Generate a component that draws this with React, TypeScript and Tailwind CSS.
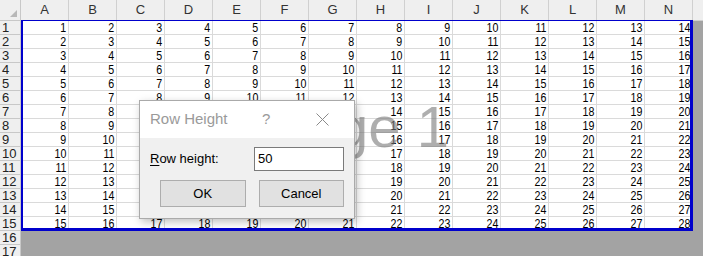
import React from 'react';

const COLS = ['A', 'B', 'C', 'D', 'E', 'F', 'G', 'H', 'I', 'J', 'K', 'L', 'M', 'N'];
const ROWS = Array.from({ length: 15 }, (_, i) => i + 1);

const font = { fontFamily: '"Liberation Sans", Arial, sans-serif' };

const RowHeightDialog: React.FC = () => {
  return (
    <div className="absolute left-[139px] top-[100px] z-20 w-[216px] h-[119px] border border-[#aaaaaa] bg-[#f0f0f0] shadow-[2px_3px_8px_rgba(0,0,0,0.25)] flex flex-col">
      {/* Title bar */}
      <div className="h-[37px] bg-white flex items-center pl-[10px] text-[15px] text-[#9a9a9a]">
        <span className="w-[112px]">Row Height</span>
        <span className="w-[50px]">?</span>
        <svg width="13" height="13" viewBox="0 0 13 13" className="ml-[4px]">
          <path d="M0.5 0.5L12.5 12.5M12.5 0.5L0.5 12.5" stroke="#8a8a8a" strokeWidth="1" />
        </svg>
      </div>

      {/* Body */}
      <div className="flex-1 px-[10px] pt-[9px]">
        <div className="flex items-center h-[24px]">
          <label className="w-[104px] text-[13px] text-black">
            <span className="underline underline-offset-2">R</span>ow height:
          </label>
          <div className="w-[90px] h-[24px] bg-white border border-[#7a7a7a] flex items-center px-[3px] text-[13px] text-black">
            50
          </div>
        </div>
        <div className="flex gap-[13px] mt-[9px] pl-[10px]">
          <button className="w-[86px] h-[27px] bg-[#e1e1e1] border border-[#adadad] text-[13px] text-black">
            OK
          </button>
          <button className="w-[86px] h-[27px] bg-[#e1e1e1] border border-[#adadad] text-[13px] text-black">
            Cancel
          </button>
        </div>
      </div>
    </div>
  );
};

const App: React.FC = () => {
  return (
    <div className="relative w-[703px] h-[256px] overflow-hidden bg-[#a3a3a3]" style={font}>
      {/* Column headers */}
      <div className="flex h-[21px] bg-[#efefef]">
        <div className="relative w-[21px] h-[21px] border-r border-b border-[#c8c8c8]">
          <svg width="7" height="7" viewBox="0 0 7 7" className="absolute right-[3px] bottom-[3px]">
            <polygon points="7,0 7,7 0,7" fill="#b8b8b8" />
          </svg>
        </div>
        {COLS.map((c) => (
          <div
            key={c}
            className="w-[48px] h-[21px] border-r border-b border-[#d0d0d0] flex items-center justify-center text-[13px] text-[#333333]"
          >
            {c}
          </div>
        ))}
        <div className="flex-1 border-b border-[#d0d0d0]" />
      </div>

      {/* Rows */}
      <div className="relative">
        {ROWS.map((r) => (
          <div key={r} className="flex h-[14px]">
            <div className="w-[21px] h-[14px] bg-[#efefef] border-r border-b border-[#c8c8c8] flex items-center pl-[2px] text-[13px] leading-none text-[#222222]">
              {r}
            </div>
            {COLS.map((c, i) => (
              <div
                key={c}
                className="w-[48px] h-[14px] bg-white border-r border-b border-[#dadada] flex items-center justify-end pr-[2px] text-[13px] leading-none text-black"
              >
                <span className="inline-block scale-x-[0.82] origin-right">{r + i}</span>
              </div>
            ))}
          </div>
        ))}

        {/* Page watermark */}
        <div className="absolute left-[21px] top-0 w-[672px] h-[210px] z-10 pointer-events-none flex items-center justify-center text-[58px] text-[rgba(120,120,120,0.6)]">
          Page 1
        </div>

        {/* Page break border */}
        <div className="absolute left-[21px] -top-px w-[672px] h-[211px] z-10 pointer-events-none border-l-2 border-t border-r-[3px] border-b-[3px] border-[#0000cc]" />
      </div>

      {/* Rows outside print area */}
      {[16, 17].map((r) => (
        <div key={r} className="flex h-[14px]">
          <div className="w-[21px] h-[14px] bg-[#efefef] border-r border-b border-[#c8c8c8] flex items-center pl-[2px] text-[13px] leading-none text-[#222222]">
            {r}
          </div>
        </div>
      ))}

      <RowHeightDialog />
    </div>
  );
};

export default App;
